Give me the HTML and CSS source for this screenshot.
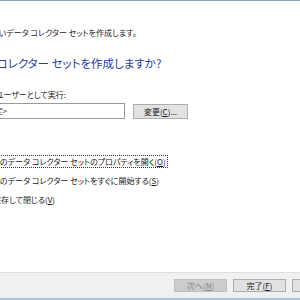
FILE: index.html
```html
<!DOCTYPE html>
<html lang="ja">
<head>
    <meta charset="UTF-8">
    <title>新しいデータ コレクター セットの作成</title>
    <link rel="stylesheet" href="styles.css">
</head>
<body>
    <div class="wizard">
        <div class="content">
            <p class="title">新しいデータ コレクター セットを作成します。</p>
            <h1 class="instruction">データ コレクター セットを作成しますか?</h1>

            <div class="runas">
                <label class="runas-label" for="runas">別のユーザーとして実行:</label>
                <div class="runas-row">
                    <div class="field" id="runas">&lt;既定&gt;</div>
                    <button class="btn change" type="button">変更(<u>C</u>)...</button>
                </div>
            </div>

            <div class="options">
                <label class="option"><input type="radio" name="after" checked><span class="focus">このデータ コレクター セットのプロパティを開く(<u>O</u>)</span></label>
                <label class="option"><input type="radio" name="after"><span>このデータ コレクター セットをすぐに開始する(<u>S</u>)</span></label>
                <label class="option"><input type="radio" name="after"><span>保存して閉じる(<u>V</u>)</span></label>
            </div>
        </div>

        <div class="footer">
            <button class="btn" type="button" disabled>次へ(<u>N</u>)</button>
            <button class="btn" type="button">完了(<u>F</u>)</button>
            <button class="btn" type="button">キャンセル</button>
        </div>
    </div>
</body>
</html>
```

FILE: styles.css
```css
html, body {
    margin: 0;
    padding: 0;
    height: 100%;
    overflow: hidden;
    background: #fff;
}

body {
    font-family: "Noto Sans CJK JP", "Liberation Sans", sans-serif;
    font-feature-settings: "palt";
    font-size: 8px;
    color: #1a1a1a;
}

.wizard {
    height: 300px;
    box-sizing: border-box;
    border-top: 1px solid #8eaac2;
    border-bottom: 2px solid #a9c9e2;
    display: flex;
    flex-direction: column;
}

.content {
    flex: 1;
    padding-top: 26px;
    margin-left: -24px;
    white-space: nowrap;
}

.title {
    margin: 0 0 0 8px;
    line-height: 12px;
}

.instruction {
    margin: 17px 0 0 -14px;
    font-size: 11.5px;
    font-weight: normal;
    line-height: 14px;
    color: #1f3d99;
}

.runas {
    margin-top: 19px;
}

.runas-label {
    display: block;
    margin-left: 4px;
    line-height: 12px;
}

.runas-row {
    display: flex;
    align-items: center;
    gap: 8px;
    margin-top: 2px;
    margin-left: 2px;
}

.field {
    width: 147px;
    height: 16px;
    box-sizing: border-box;
    border: 1px solid #9a9a9a;
    padding-left: 3px;
    line-height: 14px;
}

.btn {
    font: inherit;
    color: #1a1a1a;
    width: 55px;
    height: 15px;
    padding: 0;
    line-height: 13px;
    background: #e1e1e1;
    border: 1px solid #adadad;
    border-radius: 0;
}

.btn:disabled {
    background: #cccccc;
    border-color: #bfbfbf;
    color: #838383;
}

.options {
    margin-top: 33px;
    display: flex;
    flex-direction: column;
}

.option {
    display: flex;
    align-items: center;
    height: 19px;
}

.option input {
    width: 11px;
    height: 11px;
    margin: 0 4px 0 0;
}

.option span {
    padding: 1px;
    line-height: 9px;
    border: 1px solid transparent;
}

.option .focus {
    border: 1px dotted #333;
}

.footer {
    height: 26px;
    box-sizing: border-box;
    border-top: 1px solid #dfdfdf;
    background: #f0f0f0;
    display: flex;
    gap: 6px;
    padding: 6px 0 0 174px;
}

.footer .btn {
    width: 53px;
    height: 13px;
    line-height: 11px;
    flex: none;
}
```
